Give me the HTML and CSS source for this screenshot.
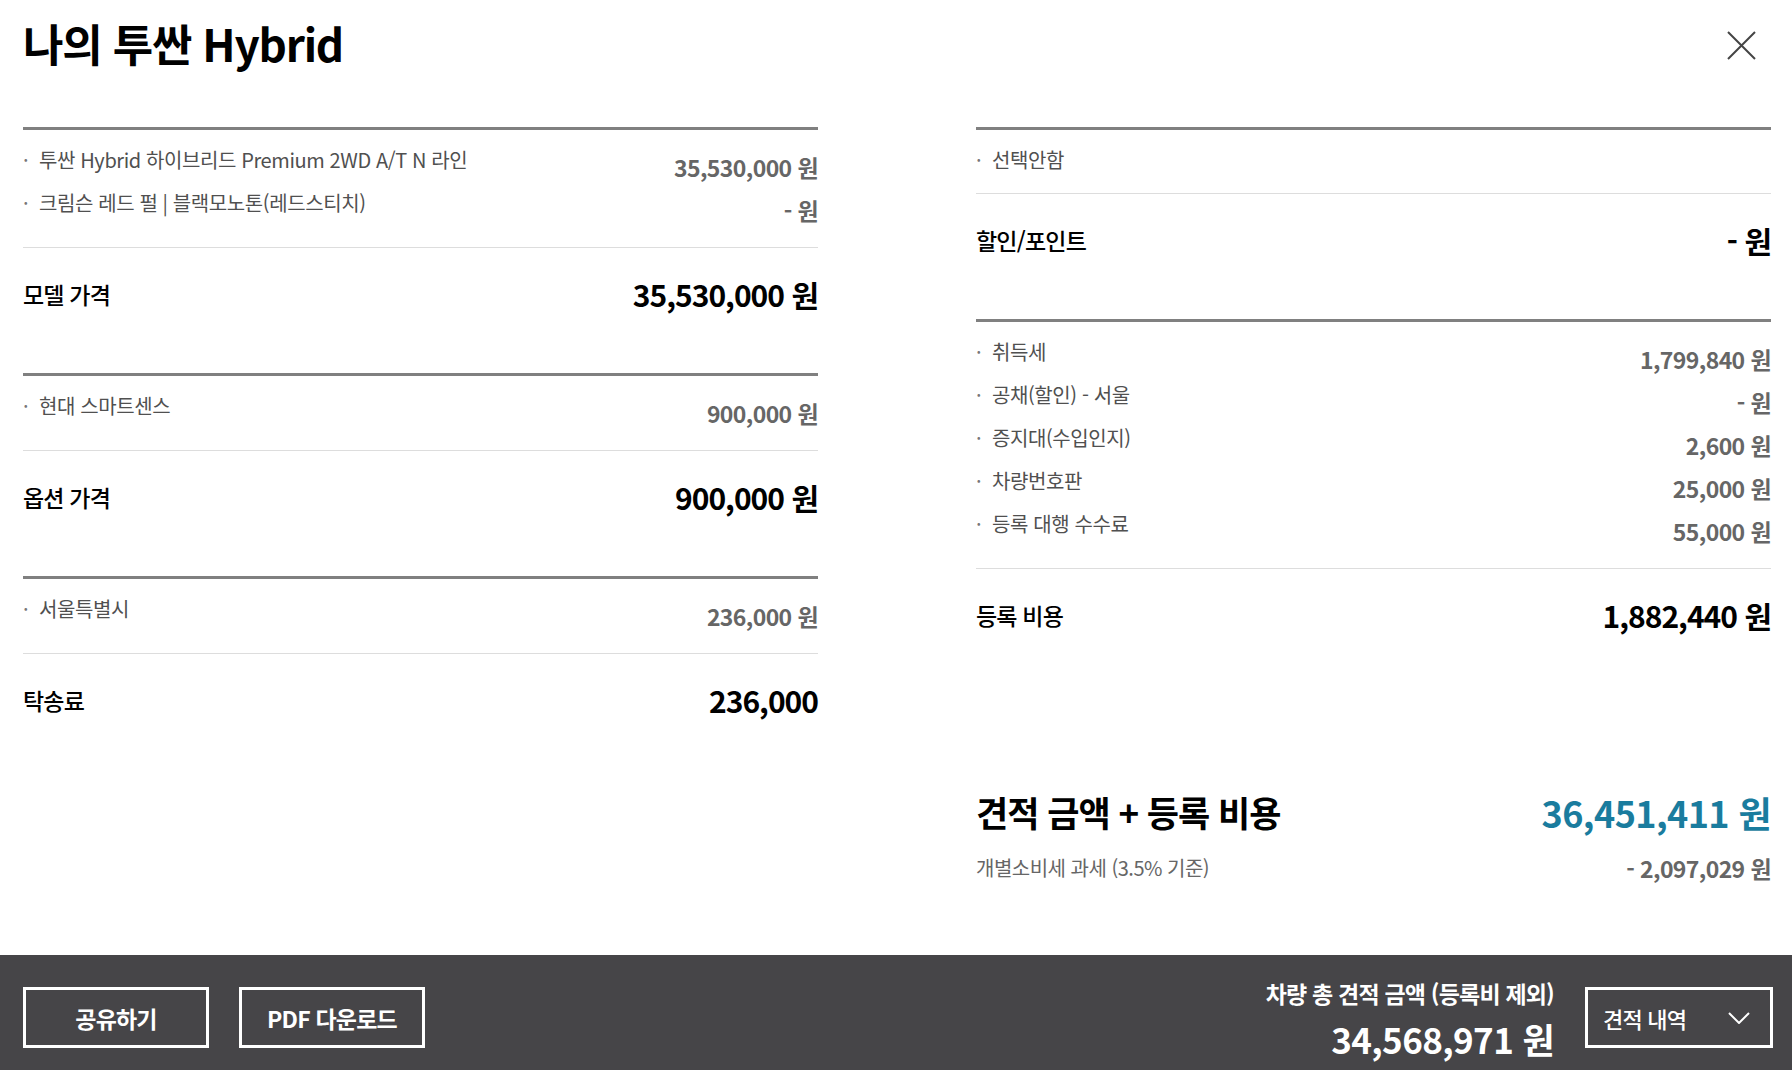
FILE: index.html
```html
<!DOCTYPE html>
<html lang="ko">
<head>
  <meta charset="UTF-8">
  <meta name="viewport" content="width=device-width, initial-scale=1.0">
  <title>나의 투싼 Hybrid</title>
  <link rel="stylesheet" href="styles.css">
</head>
<body>
  <div class="page">
    <header class="top">
      <h1 class="title">나의 투싼 Hybrid</h1>
      <button class="close" aria-label="닫기">
        <svg width="31" height="31" viewBox="0 0 31 31"><path d="M2 2 L29 29 M29 2 L2 29" stroke="#444" stroke-width="2" fill="none"/></svg>
      </button>
    </header>

    <main class="sheet">
      <div class="col">
        <section class="block">
          <ul class="items">
            <li class="item"><span class="item-name">투싼 Hybrid 하이브리드 Premium 2WD A/T N 라인</span><span class="item-price">35,530,000 원</span></li>
            <li class="item"><span class="item-name">크림슨 레드 펄 | 블랙모노톤(레드스티치)</span><span class="item-price">- 원</span></li>
          </ul>
          <div class="total"><span class="total-name">모델 가격</span><span class="total-price">35,530,000 원</span></div>
        </section>
        <section class="block">
          <ul class="items">
            <li class="item"><span class="item-name">현대 스마트센스</span><span class="item-price">900,000 원</span></li>
          </ul>
          <div class="total"><span class="total-name">옵션 가격</span><span class="total-price">900,000 원</span></div>
        </section>
        <section class="block">
          <ul class="items">
            <li class="item"><span class="item-name">서울특별시</span><span class="item-price">236,000 원</span></li>
          </ul>
          <div class="total"><span class="total-name">탁송료</span><span class="total-price">236,000</span></div>
        </section>
      </div>

      <div class="col">
        <section class="block">
          <ul class="items items-short">
            <li class="item"><span class="item-name">선택안함</span></li>
          </ul>
          <div class="total"><span class="total-name">할인/포인트</span><span class="total-price">- 원</span></div>
        </section>
        <section class="block">
          <ul class="items">
            <li class="item"><span class="item-name">취득세</span><span class="item-price">1,799,840 원</span></li>
            <li class="item"><span class="item-name">공채(할인) - 서울</span><span class="item-price">- 원</span></li>
            <li class="item"><span class="item-name">증지대(수입인지)</span><span class="item-price">2,600 원</span></li>
            <li class="item"><span class="item-name">차량번호판</span><span class="item-price">25,000 원</span></li>
            <li class="item"><span class="item-name">등록 대행 수수료</span><span class="item-price">55,000 원</span></li>
          </ul>
          <div class="total"><span class="total-name">등록 비용</span><span class="total-price">1,882,440 원</span></div>
        </section>
        <div class="summary">
          <span class="summary-name">견적 금액 + 등록 비용</span>
          <span class="summary-price">36,451,411 원</span>
        </div>
        <div class="summary-sub">
          <span>개별소비세 과세 (3.5% 기준)</span>
          <span class="summary-sub-price">- 2,097,029 원</span>
        </div>
      </div>
    </main>

    <footer class="bar">
      <div class="bar-left">
        <button class="btn">공유하기</button>
        <button class="btn">PDF 다운로드</button>
      </div>
      <div class="bar-right">
        <div class="grand">
          <span class="grand-name">차량 총 견적 금액 (등록비 제외)</span>
          <span class="grand-price">34,568,971 원</span>
        </div>
        <button class="btn btn-toggle">
          <span>견적 내역</span>
          <svg width="22" height="12" viewBox="0 0 22 12"><path d="M1 1 L11 11 L21 1" stroke="#fff" stroke-width="2" fill="none"/></svg>
        </button>
      </div>
    </footer>
  </div>
</body>
</html>
```

FILE: styles.css
```css
* { box-sizing: border-box; }
body { margin: 0; font-family: "Noto Sans CJK KR", "Noto Sans", sans-serif; color: #000; background: #fff; }
ul { list-style: none; margin: 0; padding: 0; }
button { font-family: inherit; cursor: pointer; }

.page { display: flex; flex-direction: column; min-height: 100vh; }

.top { display: flex; justify-content: space-between; align-items: flex-start; padding: 17px 35px 0 23px; }
.title { margin: 0; font-size: 44px; line-height: 52px; font-weight: 700; letter-spacing: -1.2px; }
.close { margin-top: 13px; width: 31px; height: 31px; padding: 0; border: none; background: none; }
.close svg { display: block; }

.sheet { flex: 1; display: grid; grid-template-columns: 795px 795px; column-gap: 158px; padding: 58px 0 0 23px; align-items: start; }

.block { border-top: 3px solid #808080; }
.items { padding: 15px 0 22px; display: flex; flex-direction: column; gap: 6px; }
.items-short { padding-bottom: 18px; }
.item { display: flex; justify-content: space-between; align-items: flex-start; }
.item-name { font-size: 20px; line-height: 30px; color: #505050; letter-spacing: -0.4px; }
.item-name::before { content: "·"; display: inline-block; width: 16px; color: #777; }
.item-price { margin-top: 7px; font-size: 23px; line-height: 30px; font-weight: 700; color: #666; letter-spacing: -0.6px; }

.total { display: flex; justify-content: space-between; align-items: center; border-top: 1px solid #ddd; padding: 26px 0 59px; }
.total-name { font-size: 23px; line-height: 40px; font-weight: 500; letter-spacing: -0.8px; }
.total-price { font-size: 30px; line-height: 40px; font-weight: 700; letter-spacing: -1px; }

.summary { display: flex; justify-content: space-between; align-items: center; margin-top: 96px; }
.summary-name { font-size: 35px; line-height: 44px; font-weight: 700; letter-spacing: -1px; }
.summary-price { font-size: 36px; line-height: 44px; font-weight: 700; color: #1a7c9e; letter-spacing: -0.6px; }
.summary-sub { display: flex; justify-content: space-between; align-items: center; margin-top: 19px; font-size: 20px; line-height: 30px; color: #666; letter-spacing: -0.5px; }
.summary-sub-price { font-size: 23px; font-weight: 700; letter-spacing: -0.6px; }

.bar { height: 115px; display: flex; justify-content: space-between; align-items: flex-start; background: #464548; padding: 24px 19px 0 23px; }
.bar-left { display: flex; gap: 30px; margin-top: 8px; }
.btn { height: 61px; width: 186px; border: 3px solid #fff; background: transparent; color: #fff; font-size: 23px; font-weight: 700; letter-spacing: -0.8px; }
.bar-right { display: flex; align-items: flex-start; gap: 31px; }
.grand { display: flex; flex-direction: column; align-items: flex-end; color: #fff; }
.grand-name { font-size: 23px; line-height: 28px; font-weight: 700; letter-spacing: -0.8px; }
.grand-price { margin-top: 10px; font-size: 35px; line-height: 44px; font-weight: 700; letter-spacing: -0.6px; }
.btn-toggle { margin-top: 8px; width: 188px; display: flex; justify-content: space-between; align-items: center; padding: 0 20px 0 15px; font-size: 22px; font-weight: 500; }
.btn-toggle svg { display: block; }
```
